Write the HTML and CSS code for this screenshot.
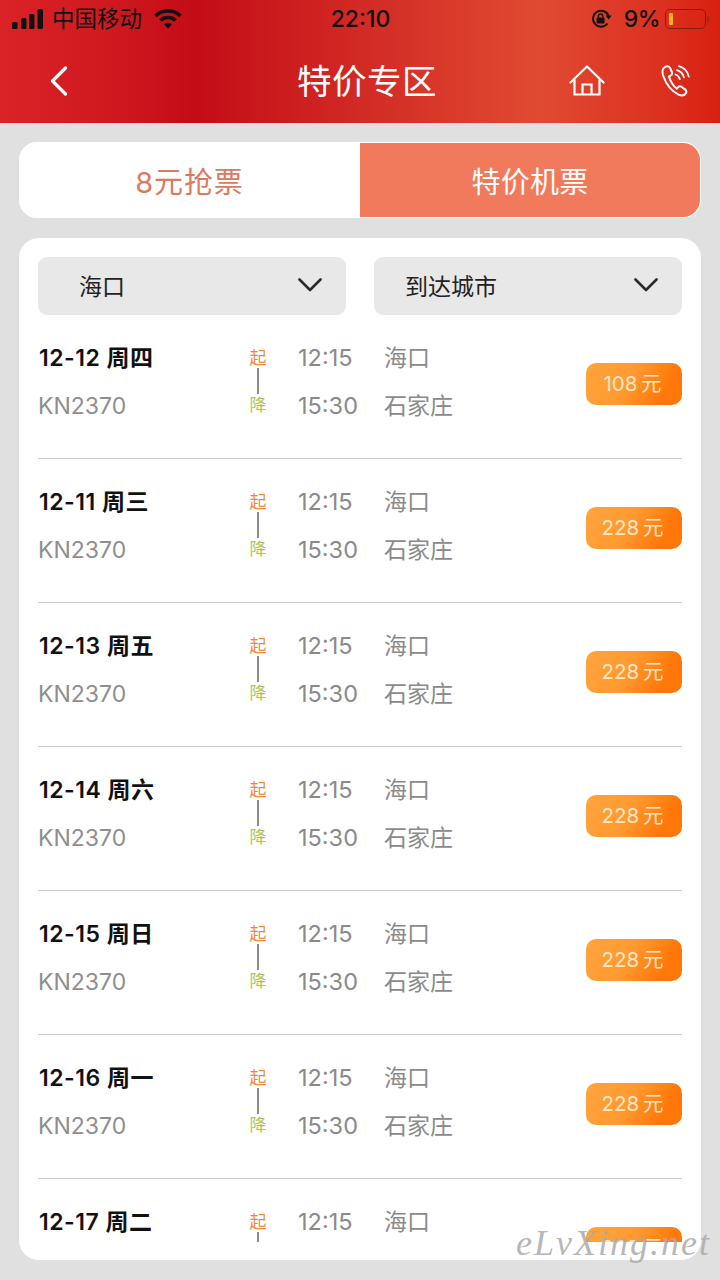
FILE: index.html
```html
<!DOCTYPE html>
<html lang="zh-CN">
<head>
<meta charset="utf-8">
<title>特价专区</title>
<link rel="stylesheet" href="styles.css">
</head>
<body>
<header class="header">
  <div class="status">
    <div class="status-left">
      <svg class="signal" width="32" height="20" viewBox="0 0 32 20"><rect x="0" y="13" width="5.5" height="7" rx="1.5"/><rect x="9" y="9" width="5.5" height="11" rx="1.5"/><rect x="17" y="5" width="5.5" height="15" rx="1.5"/><rect x="25.5" y="0" width="5.5" height="20" rx="1.5"/></svg>
      <span class="carrier">中国移动</span>
      <svg class="wifi" width="28" height="20" viewBox="0 0 28 20"><path d="M1.5 6.8C8.5 0.4 19.5 0.4 26.5 6.8" fill="none" stroke="#111" stroke-width="3.6"/><path d="M6.4 11.4C10.6 7.6 17.4 7.6 21.6 11.4" fill="none" stroke="#111" stroke-width="3.6"/><path d="M10 15.2C12.3 13.2 15.7 13.2 18 15.2L14 19.5Z" fill="#111"/></svg>
    </div>
    <div class="clock">22:10</div>
    <div class="status-right">
      <svg class="lock" width="21" height="20" viewBox="0 0 21 20"><path d="M16.5 14.5A8 8 0 1 1 17.6 7" fill="none" stroke="#111" stroke-width="2"/><path d="M14.6 6.6H20.6L17.6 10.4Z" fill="#111"/><rect x="5.6" y="8.6" width="8" height="6" rx="1" fill="#111"/><path d="M7.4 8.8V7.2A2.2 2.2 0 0 1 11.8 7.2V8.8" fill="none" stroke="#111" stroke-width="1.4"/></svg>
      <span class="percent">9%</span>
      <div class="battery"><div class="battery-level"></div></div>
      <div class="battery-tip"></div>
    </div>
  </div>
  <nav class="nav">
    <svg class="nav-back" width="18" height="30" viewBox="0 0 18 30"><path d="M15.5 2L2.5 15L15.5 28" fill="none" stroke="#fff" stroke-width="3.2" stroke-linecap="round" stroke-linejoin="round"/></svg>
    <h1 class="nav-title">特价专区</h1>
    <svg class="nav-home" width="36" height="32" viewBox="0 0 36 32"><path d="M1.5 17.5L18 1.5L34.5 17.5" fill="none" stroke="#fff" stroke-width="2.2" stroke-linecap="round" stroke-linejoin="round"/><path d="M5.5 15V29.5H30.5V15" fill="none" stroke="#fff" stroke-width="2.2" stroke-linecap="round"/><path d="M13.5 29.5V19.5H22.5V29.5" fill="none" stroke="#fff" stroke-width="2.2"/></svg>
    <svg class="nav-phone" width="30" height="32" viewBox="0 0 30 32"><path d="M4.2 1.8C1.4 3 0.8 7 2.4 11.5C5 18.5 10.5 26 17.5 29.6C20.5 31 23.5 30.4 24.8 28.4C25.8 26.9 25.5 25.6 24 24.4L20.8 22C19.4 21 18 21.2 17 22.4L15.8 23.6C12.5 21.5 8.8 15.6 8 11.4L9.6 10.6C11 9.8 11.5 8.5 10.9 7L9.2 3.2C8.3 1.4 6.3 0.8 4.2 1.8Z" fill="none" stroke="#fff" stroke-width="2" stroke-linejoin="round"/><path d="M14.5 9.5C16.6 10.3 18.2 12 18.8 14.2M16 5.2C19.4 6.2 22 8.8 23 12.4M18 1.2C22.6 2.6 26.6 6.2 27.8 11.6" fill="none" stroke="#fff" stroke-width="1.8" stroke-linecap="round"/></svg>
  </nav>
</header>

<main class="main">
  <div class="tabs">
    <div class="tab">8元抢票</div>
    <div class="tab tab-active">特价机票</div>
  </div>

  <section class="card">
    <div class="filters">
      <div class="select select-from"><span>海口</span><svg width="24" height="14" viewBox="0 0 24 14"><path d="M1.5 1.5L12 12L22.5 1.5" fill="none" stroke="#2b2b2b" stroke-width="2.6" stroke-linecap="round" stroke-linejoin="round"/></svg></div>
      <div class="select"><span>到达城市</span><svg width="24" height="14" viewBox="0 0 24 14"><path d="M1.5 1.5L12 12L22.5 1.5" fill="none" stroke="#2b2b2b" stroke-width="2.6" stroke-linecap="round" stroke-linejoin="round"/></svg></div>
    </div>
    <div class="list">
      <article class="row">
        <div class="col-flight"><div class="date">12-12 周四</div><div class="flight">KN2370</div></div>
        <div class="marker"><span class="up">起</span><i class="stem"></i><span class="down">降</span></div>
        <div class="col-time"><div>12:15</div><div>15:30</div></div>
        <div class="col-place"><div>海口</div><div>石家庄</div></div>
        <div class="price">108 元</div>
      </article>
      <article class="row">
        <div class="col-flight"><div class="date">12-11 周三</div><div class="flight">KN2370</div></div>
        <div class="marker"><span class="up">起</span><i class="stem"></i><span class="down">降</span></div>
        <div class="col-time"><div>12:15</div><div>15:30</div></div>
        <div class="col-place"><div>海口</div><div>石家庄</div></div>
        <div class="price">228 元</div>
      </article>
      <article class="row">
        <div class="col-flight"><div class="date">12-13 周五</div><div class="flight">KN2370</div></div>
        <div class="marker"><span class="up">起</span><i class="stem"></i><span class="down">降</span></div>
        <div class="col-time"><div>12:15</div><div>15:30</div></div>
        <div class="col-place"><div>海口</div><div>石家庄</div></div>
        <div class="price">228 元</div>
      </article>
      <article class="row">
        <div class="col-flight"><div class="date">12-14 周六</div><div class="flight">KN2370</div></div>
        <div class="marker"><span class="up">起</span><i class="stem"></i><span class="down">降</span></div>
        <div class="col-time"><div>12:15</div><div>15:30</div></div>
        <div class="col-place"><div>海口</div><div>石家庄</div></div>
        <div class="price">228 元</div>
      </article>
      <article class="row">
        <div class="col-flight"><div class="date">12-15 周日</div><div class="flight">KN2370</div></div>
        <div class="marker"><span class="up">起</span><i class="stem"></i><span class="down">降</span></div>
        <div class="col-time"><div>12:15</div><div>15:30</div></div>
        <div class="col-place"><div>海口</div><div>石家庄</div></div>
        <div class="price">228 元</div>
      </article>
      <article class="row">
        <div class="col-flight"><div class="date">12-16 周一</div><div class="flight">KN2370</div></div>
        <div class="marker"><span class="up">起</span><i class="stem"></i><span class="down">降</span></div>
        <div class="col-time"><div>12:15</div><div>15:30</div></div>
        <div class="col-place"><div>海口</div><div>石家庄</div></div>
        <div class="price">228 元</div>
      </article>
      <article class="row">
        <div class="col-flight"><div class="date">12-17 周二</div><div class="flight">KN2370</div></div>
        <div class="marker"><span class="up">起</span><i class="stem"></i><span class="down">降</span></div>
        <div class="col-time"><div>12:15</div><div>15:30</div></div>
        <div class="col-place"><div>海口</div><div>石家庄</div></div>
        <div class="price">228 元</div>
      </article>
    </div>
  </section>
</main>
<div class="watermark">eLvXing.net</div>
</body>
</html>
```
FILE: styles.css
```css
* { box-sizing: border-box; }
html, body { margin: 0; padding: 0; }
body {
  position: relative;
  width: 720px;
  height: 1280px;
  overflow: hidden;
  background: #e0e0e0;
  font-family: Inter, "Noto Sans CJK SC", sans-serif;
}

.header {
  height: 123px;
  background: linear-gradient(90deg, #da2327 0%, #d01a20 14%, #c40c17 27%, #d22a24 50%, #e04a32 75%, #dc3020 92%, #d8200f 100%);
}
.status {
  height: 38px;
  padding: 0 11px 0 12px;
  display: grid;
  grid-template-columns: 1fr auto 1fr;
  align-items: center;
  color: #111;
}
.status-left, .status-right { display: flex; align-items: center; }
.status-right { justify-content: flex-end; }
.signal { fill: #111; }
.carrier { margin-left: 8px; font-size: 22.5px; line-height: 38px; }
.wifi { margin-left: 12px; }
.clock { font-size: 23px; font-weight: 500; }
.lock { margin-right: 12px; }
.percent { font-size: 23px; font-weight: 500; margin-right: 5px; letter-spacing: -0.5px; }
.battery {
  width: 41px;
  height: 20px;
  padding: 3px;
  border: 1.5px solid #8e1a12;
  border-radius: 5px;
}
.battery-level { width: 4px; height: 100%; background: #f5b21f; border-radius: 1px; }
.battery-tip { width: 2px; height: 7px; margin-left: 1px; background: #a02a1c; border-radius: 0 1px 1px 0; }

.nav {
  height: 85px;
  padding: 0 29px 0 50px;
  display: flex;
  align-items: center;
}
.nav-title {
  margin: 0 0 3px 229px;
  font-size: 34.5px;
  font-weight: 400;
  letter-spacing: 0.5px;
  color: #fff;
  white-space: nowrap;
}
.nav-home { margin-left: auto; }
.nav-phone { margin-left: 56px; }

.main { padding: 19px 19px 0; }

.tabs {
  height: 76px;
  display: flex;
  background: #fff;
  border-radius: 18px;
  overflow: hidden;
}
.tab {
  display: flex;
  align-items: center;
  justify-content: center;
  font-size: 29px;
  letter-spacing: 0.3px;
  color: #dc7a60;
}
.tab:first-child { flex: 0 0 341px; letter-spacing: 0.9px; }
.tab-active {
  flex: 1;
  margin: 1px 1px 1px 0;
  color: #fff;
  background: #f27a5c;
  border-radius: 0 17px 17px 0;
}

.card {
  margin-top: 20px;
  height: 1022px;
  padding: 19px 19px 18px;
  background: #fff;
  border-radius: 20px;
}
.filters { display: grid; grid-template-columns: 1fr 1fr; gap: 28px; }
.select {
  height: 58px;
  padding: 0 24px 2px 31px;
  display: flex;
  align-items: center;
  justify-content: space-between;
  background: #e8e8e8;
  border-radius: 9px;
  font-size: 23px;
  color: #222;
}
.select-from { padding-left: 41px; }

.list { height: 927px; overflow: hidden; }
.row {
  height: 144px;
  padding: 19px 0 28px;
  border-bottom: 1px solid #cfcfcf;
  display: grid;
  grid-template-columns: 210px 20px 116px 1fr 96px;
}
.row > div { line-height: 48px; }
.date { font-size: 23px; font-weight: 600; letter-spacing: 0.5px; margin-left: 1px; color: #111; white-space: nowrap; }
.flight { font-size: 23px; color: #8e8e8e; }
.marker {
  display: flex;
  flex-direction: column;
  align-items: center;
  padding-top: 14px;
  font-size: 17px;
}
.row > .marker { line-height: 20px; }
.up { color: #ee8a3f; }
.down { color: #a9c653; }
.stem { display: block; flex: none; width: 1.5px; height: 26px; margin: 0 0 1px; background: #8a8a8a; }
.col-time {
  padding-left: 30px;
  font-size: 23.5px;
  color: #8a8a8a;
  white-space: nowrap;
}
.col-place { font-size: 23px; color: #8a8a8a; }
.price {
  align-self: start;
  margin-top: 29px;
  height: 42px;
  padding-right: 3px;
  display: flex;
  align-items: center;
  justify-content: center;
  font-size: 20.5px;
  word-spacing: -2px;
  color: #ffe6c8;
  border-radius: 10px;
  background: linear-gradient(120deg, #ffa43c 0%, #ff9a30 45%, #ff7708 80%, #ff7a0c 100%);
}

.watermark {
  position: absolute;
  left: 516px;
  top: 1222px;
  font-family: "Liberation Serif", serif;
  font-style: italic;
  font-size: 36px;
  letter-spacing: 2px;
  white-space: nowrap;
  color: rgba(170, 170, 170, 0.85);
}
```
